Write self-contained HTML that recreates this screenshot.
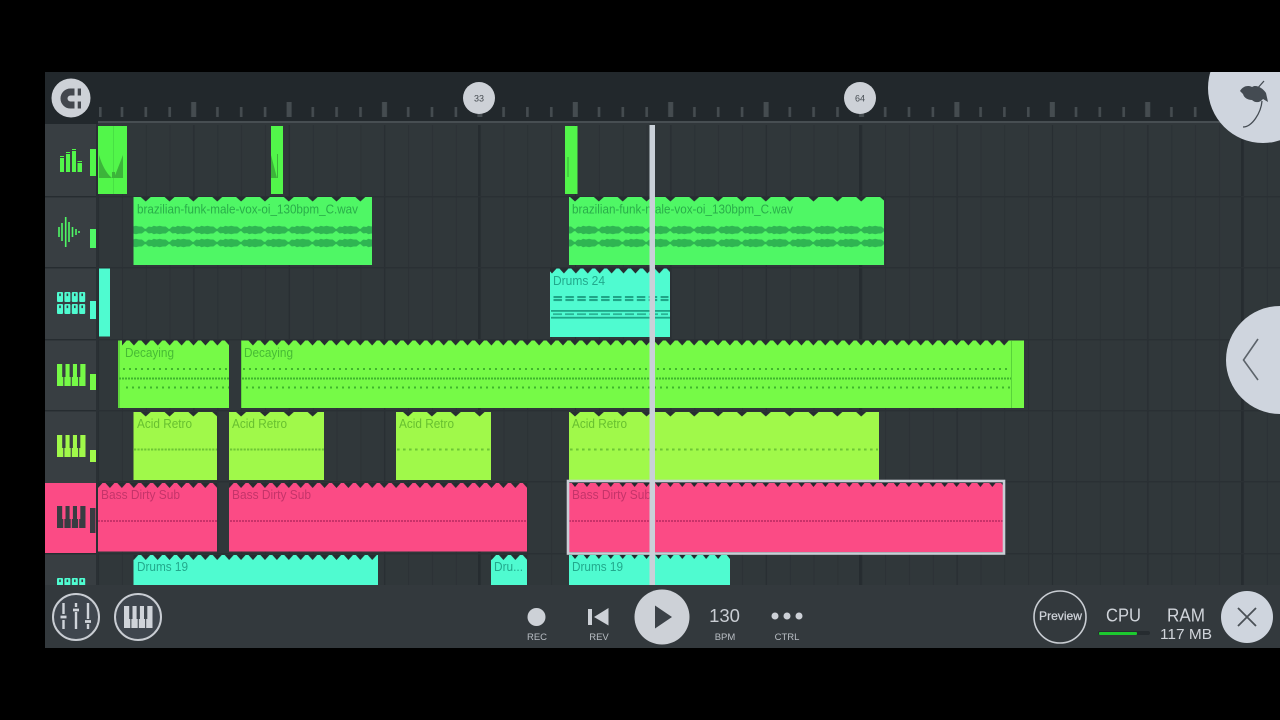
<!DOCTYPE html>
<html><head><meta charset="utf-8"><style>
html,body{margin:0;padding:0;background:#000;width:1280px;height:720px;overflow:hidden}
svg{display:block;font-family:"Liberation Sans",sans-serif;filter:blur(.35px)}
</style></head><body>
<svg width="1280" height="720" viewBox="0 0 1280 720" xmlns="http://www.w3.org/2000/svg">
<defs>
<pattern id="grid" width="95.4" height="20" patternUnits="userSpaceOnUse">
<rect x="-0.7" width="1.4" height="20" fill="#282e32"/><rect x="94.7" width="1.4" height="20" fill="#282e32"/>
<rect x="23.4" width="1" height="20" fill="#2b3135"/>
<rect x="47.2" width="1" height="20" fill="#2b3135"/>
<rect x="71.1" width="1" height="20" fill="#2b3135"/>
</pattern>
<pattern id="ticks" width="95.4" height="20" patternUnits="userSpaceOnUse">
<rect x="-2.2" y="0" width="5" height="15" fill="#454c50"/><rect x="93.2" y="0" width="5" height="15" fill="#454c50"/>
<rect x="22.7" y="5" width="2.6" height="10" fill="#454c50"/>
<rect x="46.5" y="5" width="2.6" height="10" fill="#454c50"/>
<rect x="70.4" y="5" width="2.6" height="10" fill="#454c50"/>
</pattern>
<pattern id="n24" width="23.85" height="6" patternUnits="userSpaceOnUse">
<path d="M-5 0H5L0 4.5ZM18.85 0H28.85L23.85 4.5Z" fill="#272d31"/>
</pattern>
<pattern id="n12" width="11.925" height="6" patternUnits="userSpaceOnUse">
<path d="M-4.5 0H4.5L0 5ZM7.4 0H16.4L11.9 5Z" fill="#272d31"/>
</pattern>
<pattern id="n12s" width="11.925" height="6" patternUnits="userSpaceOnUse">
<path d="M-3.2 0H3.2L0 4ZM8.7 0H15.1L11.9 4Z" fill="#24292e"/>
</pattern>
<pattern id="d6g" width="6" height="2" patternUnits="userSpaceOnUse"><rect width="2" height="2" fill="#3fb52d"/></pattern>
<pattern id="d3g" width="3" height="2" patternUnits="userSpaceOnUse"><rect width="2" height="2" fill="#3fb52d"/></pattern>
<pattern id="d3a" width="3.4" height="2" patternUnits="userSpaceOnUse"><rect width="2.2" height="2" fill="#6cc634"/></pattern>
<pattern id="d6a" width="6" height="2" patternUnits="userSpaceOnUse"><rect width="2.6" height="2" fill="#6cc634"/></pattern>
<pattern id="d3p" width="3" height="2" patternUnits="userSpaceOnUse"><rect width="2" height="2" fill="#c9326a"/></pattern>
<pattern id="wave" width="23.85" height="12" patternUnits="userSpaceOnUse">
<path d="M0 6L1 4L3 2.500L6 3L8 1.800L11 2.500L14 1.800L17 2.500L20 2.500L22 4L23.85 6L22 8L20 9.500L17 9.500L14 10.200L11 9.500L8 10.200L6 9L3 9.500L1 8Z" fill="#2fb552"/>
<rect y="4.800" width="23.85" height="2.400" fill="#2fb552"/>
</pattern>
<pattern id="dash" width="11.9" height="3" patternUnits="userSpaceOnUse"><rect width="8.500" height="2.200" fill="#1fa587"/></pattern>
<pattern id="dashl" width="12" height="2" patternUnits="userSpaceOnUse"><rect width="9" height="1.800" fill="#26ad90"/></pattern>
<g id="keys"><rect x="0" width="6.3" height="22"/><rect x="7.4" width="6.3" height="22"/><rect x="14.8" width="6.3" height="22"/><rect x="22.2" width="6.3" height="22"/>
<rect x="5.2" width="3.3" height="13" fill="currentColor"/><rect x="12.6" width="3.3" height="13" fill="currentColor"/><rect x="20" width="3.3" height="13" fill="currentColor"/></g>
<g id="pads"><rect x="0" width="6" height="10" rx="1"/><rect x="7.4" width="6" height="10" rx="1"/><rect x="14.8" width="6" height="10" rx="1"/><rect x="22.2" width="6" height="10" rx="1"/>
<rect x="2.2" y="1.5" width="1.6" height="2.6" fill="#363c41"/><rect x="9.6" y="1.5" width="1.6" height="2.6" fill="#363c41"/><rect x="17" y="1.5" width="1.6" height="2.6" fill="#363c41"/><rect x="24.4" y="1.5" width="1.6" height="2.6" fill="#363c41"/></g>
</defs>

<rect x="45" y="72" width="1235" height="576" fill="#30373a"/>
<!-- grid -->
<g transform="translate(98.5,125)"><rect x="-1" width="1183" height="460" fill="url(#grid)"/></g>
<rect x="478" y="125" width="2.5" height="460" fill="#262c30"/><rect x="859" y="125" width="2.5" height="460" fill="#262c30"/><rect x="1241" y="125" width="2.5" height="460" fill="#262c30"/>
<g fill="#2a3034"><rect x="45" y="196" width="1235" height="1.4"/><rect x="45" y="267" width="1235" height="1.4"/><rect x="45" y="339" width="1235" height="1.4"/><rect x="45" y="410" width="1235" height="1.4"/><rect x="45" y="481" width="1235" height="1.4"/><rect x="45" y="553" width="1235" height="1.4"/></g>

<!-- ruler -->
<rect x="45" y="72" width="1235" height="52" fill="#22282c"/>
<g transform="translate(98,102)"><rect width="1182" height="15" fill="url(#ticks)"/></g>
<rect x="96" y="100" width="6" height="18" fill="#22282c"/><rect x="99" y="107" width="2.6" height="10" fill="#454c50"/>
<rect x="98" y="121" width="1182" height="2.4" fill="#474e52"/>

<!-- track headers -->
<rect x="45" y="124" width="52" height="461" fill="#383e42"/>
<g fill="#262c30"><rect x="45" y="196" width="52" height="1.4"/><rect x="45" y="267" width="52" height="1.4"/><rect x="45" y="339" width="52" height="1.4"/><rect x="45" y="410" width="52" height="1.4"/></g>
<rect x="45" y="553" width="52" height="1.4" fill="#262c30"/>
<rect x="45" y="483" width="53" height="70" fill="#fb4b85"/>
<rect x="96" y="124" width="2" height="461" fill="#2a3034"/>

<!-- icons -->
<g fill="#52f64a"><rect x="60" y="158" width="4" height="14"/><rect x="60" y="156" width="4" height="1"/><rect x="66" y="154" width="4" height="18"/><rect x="66" y="152" width="4" height="1"/><rect x="72" y="151" width="4" height="21"/><rect x="72" y="149" width="4" height="1"/><rect x="77.5" y="163" width="4.5" height="9"/><rect x="77.5" y="161" width="4.5" height="1"/><rect x="90" y="149" width="6" height="27"/></g>
<g stroke="#4ff765" stroke-width="1.6"><path d="M59 227V237M62 223V241M65.7 217V247M69 222V242M72.5 227V237M76 229V235M79 231V233"/></g><rect x="90" y="229" width="6" height="19" fill="#4ff765"/>
<g fill="#4ffbd0"><use href="#pads" x="57" y="292"/><use href="#pads" x="57" y="304"/><rect x="90" y="301" width="6" height="18"/></g>
<g fill="#76fa47" color="#383e42"><use href="#keys" x="57" y="364"/><rect x="90" y="374" width="6" height="16"/></g>
<g fill="#a0f94a" color="#383e42"><use href="#keys" x="57" y="435"/><rect x="90" y="450" width="6" height="12"/></g>
<g fill="#383c42" color="#fb4b85"><use href="#keys" x="57" y="506"/><rect x="90" y="508" width="5.5" height="25"/></g>
<g fill="#4ffbd0"><use href="#pads" x="57" y="578"/></g>

<!-- row 1 -->
<rect x="98" y="126" width="29" height="68" fill="#52f64a"/><rect x="113" y="126" width="1" height="68" fill="#48e044"/>
<path d="M99 155C102 165 106 173 112 178H99Z" fill="#3cb53a"/><path d="M114 178L123 155V178Z" fill="#3cb53a"/><rect x="112" y="172" width="3" height="6" fill="#3cb53a"/>
<rect x="271" y="126" width="12" height="68" fill="#52f64a"/><path d="M271 155L277 178H271Z" fill="#3cb53a"/><rect x="277" y="154" width="1" height="24" fill="#3cb53a"/>
<rect x="565" y="126" width="12.500" height="68" fill="#52f64a"/><rect x="567" y="157" width="2" height="20" fill="#45cf42"/>

<!-- row 2 -->
<g fill="#4ff765"><rect x="133.500" y="197" width="238.500" height="68"/><rect x="569" y="197" width="315" height="68"/></g>
<g transform="translate(98,197)"><rect x="35.500" width="238.500" height="5" fill="url(#n24)"/><rect x="471" width="315" height="5" fill="url(#n24)"/></g>
<g transform="translate(98,224)"><rect x="35.500" width="238.500" height="12" fill="url(#wave)"/><rect x="471" width="315" height="12" fill="url(#wave)"/></g>
<g transform="translate(98,237)"><rect x="35.500" width="238.500" height="12" fill="url(#wave)"/><rect x="471" width="315" height="12" fill="url(#wave)"/></g>
<g fill="#2aad4a" font-size="12.500"><text x="137" y="213.500" textLength="221" lengthAdjust="spacingAndGlyphs">brazilian-funk-male-vox-oi_130bpm_C.wav</text><text x="572" y="213.500" textLength="221" lengthAdjust="spacingAndGlyphs">brazilian-funk-male-vox-oi_130bpm_C.wav</text></g>

<!-- row 3 -->
<rect x="99" y="268.500" width="11" height="68" fill="#4ffbd0"/>
<rect x="550" y="268.500" width="120" height="68.500" fill="#4ffbd0"/>
<g transform="translate(552,268.500)"><rect x="-2" width="120" height="5" fill="url(#n12)"/></g>
<g transform="translate(553.500,296)"><rect x="-2" width="117" height="2.200" fill="url(#dash)"/></g>
<g transform="translate(553.500,299)"><rect x="-2" width="117" height="2.200" fill="url(#dash)"/></g>
<rect x="551" y="310" width="119" height="1.800" fill="#1fa587"/><g transform="translate(553,313.300)"><rect x="-2" width="117" height="1.800" fill="url(#dashl)"/></g><rect x="551" y="316.800" width="119" height="1.800" fill="#1fa587"/>
<text x="553" y="285" font-size="12.500" fill="#22a98c" textLength="52" lengthAdjust="spacingAndGlyphs">Drums 24</text>

<!-- row 4 -->
<g fill="#76fa47"><rect x="118" y="340.500" width="111" height="67.500"/><rect x="241" y="340.500" width="783" height="67.500"/></g>
<rect x="118" y="340.500" width="2" height="67.500" fill="#5fd63c"/>
<rect x="241" y="340.500" width="1" height="67.500" fill="#5fd63c"/>
<rect x="1011" y="341" width="1" height="67" fill="#58d43a"/>
<g transform="translate(122,340.500)"><rect x="0" width="107" height="5" fill="url(#n12)"/></g>
<g transform="translate(241,340.500)"><rect x="6" width="764" height="5" fill="url(#n12)"/></g>
<g transform="translate(123,368)"><rect width="106" height="2" fill="url(#d6g)"/></g>
<g transform="translate(119,377.500)"><rect width="110" height="2" fill="url(#d3g)"/></g>
<g transform="translate(126,386.500)"><rect width="103" height="2" fill="url(#d6g)"/></g>
<g transform="translate(243,368)"><rect width="768" height="2" fill="url(#d6g)"/></g>
<g transform="translate(242,377.500)"><rect width="769" height="2" fill="url(#d3g)"/></g>
<g transform="translate(246,386.500)"><rect width="765" height="2" fill="url(#d6g)"/></g>
<g fill="#47bb34" font-size="12.500"><text x="125" y="357" textLength="49" lengthAdjust="spacingAndGlyphs">Decaying</text><text x="244" y="357" textLength="49" lengthAdjust="spacingAndGlyphs">Decaying</text></g>

<!-- row 5 -->
<g fill="#a0f94a"><rect x="133.500" y="412" width="83.500" height="68"/><rect x="229" y="412" width="95" height="68"/><rect x="396" y="412" width="95" height="68"/><rect x="569" y="412" width="310" height="68"/></g>
<g transform="translate(98,412)"><rect x="35.500" width="83.500" height="5" fill="url(#n24)"/><rect x="131" width="95" height="5" fill="url(#n24)"/><rect x="298" width="95" height="5" fill="url(#n24)"/><rect x="471" width="310" height="5" fill="url(#n24)"/></g>
<g transform="translate(134,448.500)"><rect width="83" height="2" fill="url(#d3a)"/></g>
<g transform="translate(230,448.500)"><rect width="94" height="2" fill="url(#d3a)"/></g>
<g transform="translate(397,448.500)"><rect width="94" height="2" fill="url(#d6a)"/></g>
<g transform="translate(570,448.500)"><rect width="308" height="2" fill="url(#d6a)"/></g>
<g fill="#67c030" font-size="12.500"><text x="137" y="428" textLength="55" lengthAdjust="spacingAndGlyphs">Acid Retro</text><text x="232" y="428" textLength="55" lengthAdjust="spacingAndGlyphs">Acid Retro</text><text x="399" y="428" textLength="55" lengthAdjust="spacingAndGlyphs">Acid Retro</text><text x="572" y="428" textLength="55" lengthAdjust="spacingAndGlyphs">Acid Retro</text></g>

<!-- row 6 -->
<g fill="#fb4b85"><rect x="98" y="483" width="119" height="68.500"/><rect x="229" y="483" width="298" height="68.500"/><rect x="569" y="483" width="434" height="69"/></g>
<g transform="translate(98,483)"><rect x="0" width="119" height="5" fill="url(#n12)"/><rect x="131" width="298" height="5" fill="url(#n12)"/><rect x="471" width="434" height="5" fill="url(#n12s)"/></g>
<g transform="translate(98,520)"><rect width="119" height="2" fill="url(#d3p)"/><rect x="131" width="298" height="2" fill="url(#d3p)"/><rect x="471" width="434" height="2" fill="url(#d3p)"/></g>
<g fill="none" stroke="#c9ced6" stroke-width="2.600"><rect x="568" y="481" width="436" height="72.500"/></g>
<g fill="#c4346a" font-size="12.500"><text x="101" y="499" textLength="79" lengthAdjust="spacingAndGlyphs">Bass Dirty Sub</text><text x="232" y="499" textLength="79" lengthAdjust="spacingAndGlyphs">Bass Dirty Sub</text><text x="572" y="499" textLength="79" lengthAdjust="spacingAndGlyphs">Bass Dirty Sub</text></g>

<!-- row 7 -->
<g fill="#4ffbd0"><rect x="133.500" y="555" width="244.500" height="30"/><rect x="491" y="555" width="36" height="30"/><rect x="569" y="555" width="161" height="30"/></g>
<g transform="translate(98,555)"><rect x="35.500" width="244.500" height="5" fill="url(#n12)"/><rect x="393" width="36" height="5" fill="url(#n12)"/><rect x="471" width="161" height="5" fill="url(#n12s)"/></g>
<g fill="#22a98c" font-size="12.500"><text x="137" y="571" textLength="51" lengthAdjust="spacingAndGlyphs">Drums 19</text><text x="494" y="571" textLength="29" lengthAdjust="spacingAndGlyphs">Dru...</text><text x="572" y="571" textLength="51" lengthAdjust="spacingAndGlyphs">Drums 19</text></g>

<!-- playhead -->
<rect x="649.500" y="125" width="5.500" height="460" fill="#c9d0d8"/>

<!-- ruler circles -->
<circle cx="71" cy="98" r="19.500" fill="#cdd1d7"/>
<path d="M81 92H70.500A6.500 6.500 0 0 0 70.500 105H81" fill="none" stroke="#43474e" stroke-width="7"/>
<rect x="74.500" y="86" width="3.200" height="24" fill="#cdd1d7"/>
<circle cx="479" cy="98" r="16" fill="#cdd1d7"/><text x="479" y="101.500" text-anchor="middle" font-size="9" fill="#444a50">33</text>
<circle cx="860" cy="98" r="16" fill="#cdd1d7"/><text x="860" y="101.500" text-anchor="middle" font-size="9" fill="#444a50">64</text>

<!-- right circles -->
<clipPath id="scr"><rect x="45" y="72" width="1235" height="576"/></clipPath>
<g clip-path="url(#scr)">
<circle cx="1263" cy="88" r="55" fill="#cfd5de"/>
<path d="M1240 91C1243 86 1248 85 1252 87C1256 84 1263 88 1266 93L1268 102L1263 99C1260 103 1255 103 1252 100C1248 100 1244 98 1243 94Z" fill="#444b52"/>
<path d="M1264 81L1256 90M1262 101C1261 113 1252 127 1243 127" fill="none" stroke="#444b52" stroke-width="1.300"/>
<circle cx="1280" cy="360" r="54" fill="#cfd5de"/>
<path d="M1258 339L1243.500 360L1258 380" fill="none" stroke="#5c636a" stroke-width="1.600"/>
</g>

<!-- bottom bar -->
<rect x="45" y="585" width="1235" height="63" fill="#33393d"/>
<circle cx="76" cy="617" r="23" fill="#3f464e" stroke="#c9cdd3" stroke-width="2"/>
<g stroke="#d0d4da" stroke-width="2.400"><path d="M63.500 603V614M63.500 620V629M76 603V607M76 612V629M88 603V619M88 624V629"/><path d="M60.500 617H66.500M73 610H79M85 621.500H91" stroke-width="2.800"/></g>
<circle cx="138" cy="617" r="23" fill="#3f464e" stroke="#c9cdd3" stroke-width="2"/>
<g fill="#d0d4da" color="#3f464e"><use href="#keys" x="124" y="606"/></g>

<circle cx="536.500" cy="617" r="9" fill="#cdd1d7"/>
<path d="M588 609H592V625H588ZM608.500 608V625.500L594 617Z" fill="#cdd1d7"/>
<circle cx="662" cy="617" r="27.500" fill="#cdd1d7"/>
<path d="M655 605.500L672 617L655 628.500Z" fill="#3b4147"/>
<text x="724.500" y="622" text-anchor="middle" font-size="18.500" fill="#c9cdd3">130</text>
<circle cx="775" cy="616" r="3.500" fill="#cdd1d7"/><circle cx="787" cy="616" r="3.500" fill="#cdd1d7"/><circle cx="799" cy="616" r="3.500" fill="#cdd1d7"/>
<g font-size="9.500" fill="#b9bec4" text-anchor="middle"><text x="537" y="640">REC</text><text x="599" y="640">REV</text><text x="725" y="640">BPM</text><text x="787" y="640">CTRL</text></g>

<circle cx="1060" cy="617" r="26" fill="none" stroke="#c9cdd3" stroke-width="1.600"/>
<text x="1060.500" y="620" text-anchor="middle" font-size="12" fill="#d0d4da" stroke="#d0d4da" stroke-width=".25" textLength="43" lengthAdjust="spacingAndGlyphs">Preview</text>
<text x="1123.500" y="621.500" text-anchor="middle" font-size="18" fill="#d0d4da" textLength="35" lengthAdjust="spacingAndGlyphs">CPU</text>
<text x="1186" y="621.500" text-anchor="middle" font-size="18" fill="#d0d4da" textLength="38" lengthAdjust="spacingAndGlyphs">RAM</text>
<text x="1186" y="639" text-anchor="middle" font-size="15" fill="#d0d4da" textLength="52" lengthAdjust="spacingAndGlyphs">117 MB</text>
<rect x="1098" y="631" width="52" height="4" rx="2" fill="#262c30"/>
<rect x="1099" y="632" width="38" height="3" rx="1" fill="#1dc92f"/>
<circle cx="1247" cy="617" r="26" fill="#cfd5de"/>
<path d="M1238 608L1256 626M1256 608L1238 626" stroke="#4a5056" stroke-width="1.800"/>
</svg>
</body></html>
